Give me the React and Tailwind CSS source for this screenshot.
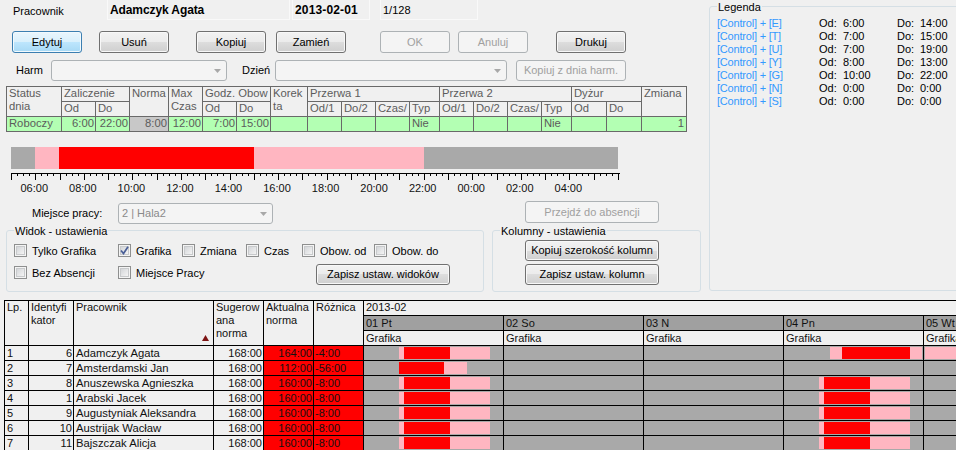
import React from "react";

const btnBase = "flex items-center justify-center rounded-[3px] border text-[11px] leading-[13px] whitespace-nowrap shrink-0";
const btnNormal = "border-[#707070] bg-[linear-gradient(#f2f2f2_0%,#ebebeb_50%,#dddddd_50%,#cfcfcf_100%)] text-black shadow-[inset_0_0_0_1px_#f8f8f8]";
const btnActive = "border-[#3c7fb1] bg-[linear-gradient(#eaf6fd_0%,#d9f0fc_50%,#bee6fd_50%,#a7d9f5_100%)] text-black shadow-[inset_0_0_0_1px_#f2fafe]";
const btnOff = "border-[#adb2b5] bg-[#f4f4f4] text-[#a0a0a0]";

function Btn({ kind = "normal", className = "", children }) {
  const k = kind === "active" ? btnActive : kind === "off" ? btnOff : btnNormal;
  return <div className={`${btnBase} ${k} ${className}`}>{children}</div>;
}

function Arrow() {
  return (
    <svg width="7" height="4" viewBox="0 0 7 4" className="shrink-0">
      <path d="M0 0H7L3.5 4Z" fill="#a8a8a8" />
    </svg>
  );
}

function Combo({ className = "", text }) {
  return (
    <div className={`flex items-center justify-between rounded-[3px] border border-[#adb2b5] bg-[#f4f4f4] pl-[3px] pr-[5px] text-[#8a8a8a] shrink-0 ${className}`}>
      <span>{text}</span>
      <Arrow />
    </div>
  );
}

function Check({ label, checked, className = "" }) {
  return (
    <div className={`flex items-center gap-[5px] h-[13px] shrink-0 ${className}`}>
      <div className="w-[13px] h-[13px] border border-[#8e8f8f] bg-[#f4f4f4] p-[1px] shrink-0">
        <div className="w-full h-full border border-[#c8cacc] bg-gradient-to-br from-[#d4d6d9] to-[#f4f4f4] flex items-center justify-center">
          {checked && (
            <svg width="9" height="9" viewBox="0 0 9 9" className="shrink-0">
              <path d="M1 4.5L3.5 7.5L8 0.8" fill="none" stroke="#4a5f97" strokeWidth="1.7" />
            </svg>
          )}
        </div>
      </div>
      <span className="whitespace-nowrap pt-[1px]">{label}</span>
    </div>
  );
}

function Group({ title, className = "", children }) {
  return (
    <div className={`relative rounded-[3px] border border-[#d5dfe5] shrink-0 ${className}`}>
      <span className="absolute left-[7px] top-[-6px] bg-[#f0f0f0] px-[1px] leading-[13px] whitespace-nowrap">{title}</span>
      {children}
    </div>
  );
}

function TH({ className = "", children }) {
  return <div className={`bg-[#f0f0f0] pl-[2px] text-[#5c5c5c] overflow-hidden whitespace-nowrap ${className}`}>{children}</div>;
}
function TD({ className = "bg-[#b3ffb3]", right, children }) {
  return <div className={`pl-[2px] text-[#5c5c5c] overflow-hidden whitespace-nowrap ${right ? "text-right pr-[1px]" : ""} ${className}`}>{children}</div>;
}

function TopTable() {
  return (
    <div className="ml-[6px] mt-[5px] w-[681px] grid gap-px p-px bg-[#696969] leading-[13px] text-[11.25px] grid-rows-[14px_14px_14px] grid-cols-[54px_33px_33px_38px_33px_33px_33px_36px_33px_33px_33px_29px_33px_33px_33px_29px_34px_34px_44px]">
      <TH className="row-span-2">Status<br />dnia</TH>
      <TH className="col-span-2">Zaliczenie</TH>
      <TH className="row-span-2">Norma</TH>
      <TH className="row-span-2">Max<br />Czas</TH>
      <TH className="col-span-2">Godz. Obow</TH>
      <TH className="row-span-2">Korek<br />ta</TH>
      <TH className="col-span-4">Przerwa 1</TH>
      <TH className="col-span-4">Przerwa 2</TH>
      <TH className="col-span-2">Dyżur</TH>
      <TH className="row-span-2">Zmiana</TH>
      <TH>Od</TH><TH>Do</TH>
      <TH>Od</TH><TH>Do</TH>
      <TH>Od/1</TH><TH>Do/2</TH><TH>Czas/</TH><TH>Typ</TH>
      <TH>Od/1</TH><TH>Do/2</TH><TH>Czas/</TH><TH>Typ</TH>
      <TH>Od</TH><TH>Do</TH>
      <TD>Roboczy</TD>
      <TD right>6:00</TD>
      <TD right>22:00</TD>
      <TD right className="bg-[#c8c8c8]">8:00</TD>
      <TD right>12:00</TD>
      <TD right>7:00</TD>
      <TD right>15:00</TD>
      <TD></TD>
      <TD></TD><TD></TD><TD></TD><TD>Nie</TD>
      <TD></TD><TD></TD><TD></TD><TD>Nie</TD>
      <TD></TD><TD></TD>
      <TD right className="bg-[#b3ffb3] pr-[2px]">1</TD>
    </div>
  );
}

function Ruler() {
  const step = 607 / 100;
  const ticks = [];
  for (let i = 0; i <= 100; i++) {
    const x = Math.round(i * step) + 0.5;
    ticks.push(<line key={i} x1={x} x2={x} y1="0" y2={i % 4 === 0 ? 7 : 3} stroke="#000" />);
  }
  return (
    <svg width="609" height="8" className="ml-[11px] mt-[4px] block">
      <line x1="0" x2="609" y1="0.5" y2="0.5" stroke="#000" />
      {ticks}
    </svg>
  );
}

const hours = ["06:00", "08:00", "10:00", "12:00", "14:00", "16:00", "18:00", "20:00", "22:00", "00:00", "02:00", "04:00"];
const legend = [
  ["E", "6:00", "14:00"],
  ["T", "7:00", "15:00"],
  ["U", "7:00", "19:00"],
  ["Y", "8:00", "13:00"],
  ["G", "10:00", "22:00"],
  ["N", "0:00", "0:00"],
  ["S", "0:00", "0:00"],
];

function Bar({ s }) {
  if (!s) return null;
  return (
    <div className="flex h-full" style={{ marginLeft: s[0] }}>
      <div className="h-full bg-[#ffb6c1]" style={{ width: s[1] }} />
      <div className="h-full bg-[#ff0000]" style={{ width: s[2] }} />
      <div className="h-full bg-[#ffb6c1]" style={{ width: s[3] }} />
    </div>
  );
}

const n = [35, 5, 46, 40];
const people = [
  [1, 6, "Adamczyk Agata", "164:00", "-4:00", [n, null, null, [46, 12, 68, 12], [1, 139, 0, 0]]],
  [2, 7, "Amsterdamski Jan", "112:00", "-56:00", [[35, 0, 45, 23], null, null, null, null]],
  [3, 8, "Anuszewska Agnieszka", "160:00", "-8:00", [n, null, null, n, null]],
  [4, 1, "Arabski Jacek", "160:00", "-8:00", [n, null, null, n, null]],
  [5, 9, "Augustyniak Aleksandra", "160:00", "-8:00", [n, null, null, n, null]],
  [6, 10, "Austrijak Wacław", "160:00", "-8:00", [n, null, null, n, null]],
  [7, 11, "Bajszczak Alicja", "160:00", "-8:00", [n, null, null, n, null]],
];
const days = ["01 Pt", "02 So", "03 N", "04 Pn", "05 Wt"];

function HH({ className = "", children }) {
  return <div className={`bg-[#f0f0f0] pl-[2px] overflow-hidden whitespace-nowrap ${className}`}>{children}</div>;
}

function Schedule() {
  return (
    <div className="ml-[4px] w-max grid gap-px p-px bg-black leading-[14px] text-[#111] grid-cols-[23px_44px_139px_49px_49px_49px_139px_139px_139px_139px_139px] auto-rows-[14px]">
      <HH className="row-span-3 leading-[13px]">Lp.</HH>
      <HH className="row-span-3 leading-[13px]">Identyfi<br />kator</HH>
      <HH className="row-span-3 relative leading-[13px]">
        Pracownik
        <svg width="7" height="6" viewBox="0 0 7 6" className="absolute right-[4px] bottom-[4px]">
          <path d="M3.5 0L7 6H0Z" fill="#7d1414" />
        </svg>
      </HH>
      <HH className="row-span-3 leading-[13px]">Sugerow<br />ana<br />norma</HH>
      <HH className="row-span-3 leading-[13px]">Aktualna<br />norma</HH>
      <HH className="row-span-3 leading-[13px]">Różnica</HH>
      <HH className="col-span-5 leading-[13px]">2013-02</HH>
      {days.map((d) => (
        <div key={d} className="bg-[#a0a0a0] pl-[2px] whitespace-nowrap">{d}</div>
      ))}
      {days.map((d) => (
        <HH key={d}>Grafika</HH>
      ))}
      {people.map((p) => (
        <React.Fragment key={p[0]}>
          <div className="bg-[#f0f0f0] pl-[2px]">{p[0]}</div>
          <div className="bg-[#f0f0f0] text-right pr-[1px]">{p[1]}</div>
          <div className="bg-[#f0f0f0] pl-[2px] whitespace-nowrap text-[11.25px]">{p[2]}</div>
          <div className="bg-[#f0f0f0] text-right pr-[1px]">168:00</div>
          <div className="bg-[#ff0000] text-right pr-[1px]">{p[3]}</div>
          <div className="bg-[#ff0000] pl-[1px]">{p[4]}</div>
          {p[5].map((s, i) => (
            <div key={i} className="bg-[#a9a9a9] py-[1px] overflow-hidden">
              <Bar s={s} />
            </div>
          ))}
        </React.Fragment>
      ))}
    </div>
  );
}

export default function App() {
  return (
    <div className="w-[956px] h-[450px] overflow-hidden bg-[#f0f0f0] text-black text-[11px] leading-[13px] font-['Liberation_Sans',sans-serif]">
      <div className="flex h-[300px]">
        <div className="w-[709px] shrink-0">
          <div className="flex items-center h-[20px] pl-[13px]">
            <span className="w-[94px] shrink-0 pt-[2px]">Pracownik</span>
            <div className="w-[183px] h-[20px] border border-t-0 border-[#f9f9f9] pl-[2px] pt-[2px] flex items-center font-bold text-[12px] tracking-[-0.1px] shrink-0">Adamczyk Agata</div>
            <div className="ml-[2px] w-[78px] h-[20px] border border-t-0 border-[#f9f9f9] pl-[2px] pt-[2px] flex items-center font-bold text-[12px] tracking-[0.15px] shrink-0">2013-02-01</div>
            <div className="ml-[10px] w-[98px] h-[20px] border border-t-0 border-[#f9f9f9] pl-[2px] pt-[2px] flex items-center shrink-0">1/128</div>
          </div>

          <div className="flex mt-[11px] pl-[12px] h-[22px]">
            <Btn kind="active" className="w-[70px]">Edytuj</Btn>
            <Btn className="w-[70px] ml-[17px]">Usuń</Btn>
            <Btn className="w-[70px] ml-[27px]">Kopiuj</Btn>
            <Btn className="w-[70px] ml-[10px]">Zamień</Btn>
            <Btn kind="off" className="w-[70px] ml-[34px]">OK</Btn>
            <Btn kind="off" className="w-[70px] ml-[8px]">Anuluj</Btn>
            <Btn className="w-[70px] ml-[28px]">Drukuj</Btn>
          </div>

          <div className="flex items-center mt-[7px] pl-[16px] h-[21px]">
            <span className="w-[35px] shrink-0">Harm</span>
            <Combo className="w-[176px] h-[21px]" />
            <span className="ml-[15px] w-[33px] shrink-0">Dzień</span>
            <Combo className="w-[232px] h-[21px]" />
            <Btn kind="off" className="ml-[9px] w-[110px] h-[21px]">Kopiuj z dnia harm.</Btn>
          </div>

          <TopTable />

          <div className="ml-[11px] mt-[15px] w-[607px] h-[22px] flex">
            <div className="w-[24px] bg-[#a9a9a9]" />
            <div className="w-[24px] bg-[#ffb6c1]" />
            <div className="w-[195px] bg-[#ff0000]" />
            <div className="w-[170px] bg-[#ffb6c1]" />
            <div className="w-[194px] bg-[#a9a9a9]" />
          </div>
          <Ruler />
          <div className="flex ml-[10px] mt-[1px] h-[13px]">
            {hours.map((h) => (
              <span key={h} className="w-[48.56px] text-center shrink-0 text-[#111]">{h}</span>
            ))}
          </div>

          <div className="flex items-start mt-[6px] pl-[32px] h-[22px]">
            <span className="w-[86px] mt-[6px] shrink-0">Miejsce pracy:</span>
            <Combo className="w-[155px] h-[21px] mt-[2px]" text="2 | Hala2" />
            <Btn kind="off" className="ml-[252px] w-[134px] h-[22px]">Przejdź do absencji</Btn>
          </div>

          <div className="flex mt-[7px]">
            <Group title="Widok - ustawienia" className="ml-[6px] w-[478px] h-[62px] pl-[7px] pt-[13px]">
              <div className="flex">
                <Check className="w-[104px]" label="Tylko Grafika" />
                <Check className="w-[64px]" label="Grafika" checked />
                <Check className="w-[64px]" label="Zmiana" />
                <Check className="w-[56px]" label="Czas" />
                <Check className="w-[72px]" label="Obow. od" />
                <Check className="w-[72px]" label="Obow. do" />
              </div>
              <div className="flex items-start mt-[7px]">
                <Check className="w-[104px] mt-[2px]" label="Bez Absencji" />
                <Check className="w-[198px] mt-[2px]" label="Miejsce Pracy" />
                <Btn className="w-[134px] h-[21px]">Zapisz ustaw. widoków</Btn>
              </div>
            </Group>
            <Group title="Kolumny - ustawienia" className="ml-[8px] w-[209px] h-[62px] pl-[32px] pt-[9px]">
              <Btn className="w-[134px] h-[21px]">Kopiuj szerokość kolumn</Btn>
              <Btn className="w-[134px] h-[21px] mt-[3px]">Zapisz ustaw. kolumn</Btn>
            </Group>
          </div>
        </div>

        <Group title="Legenda" className="mt-[6px] w-[256px] h-[285px] pl-[7px] pt-[10px]">
          <div className="grid grid-cols-[102px_24px_54px_23px_40px] auto-rows-[13px] whitespace-nowrap">
            {legend.map((r) => (
              <React.Fragment key={r[0]}>
                <span className="text-[#3399ff] tracking-[-0.2px]">[Control] + [{r[0]}]</span>
                <span>Od:</span>
                <span>{r[1]}</span>
                <span>Do:</span>
                <span>{r[2]}</span>
              </React.Fragment>
            ))}
          </div>
        </Group>
      </div>

      <Schedule />
    </div>
  );
}
